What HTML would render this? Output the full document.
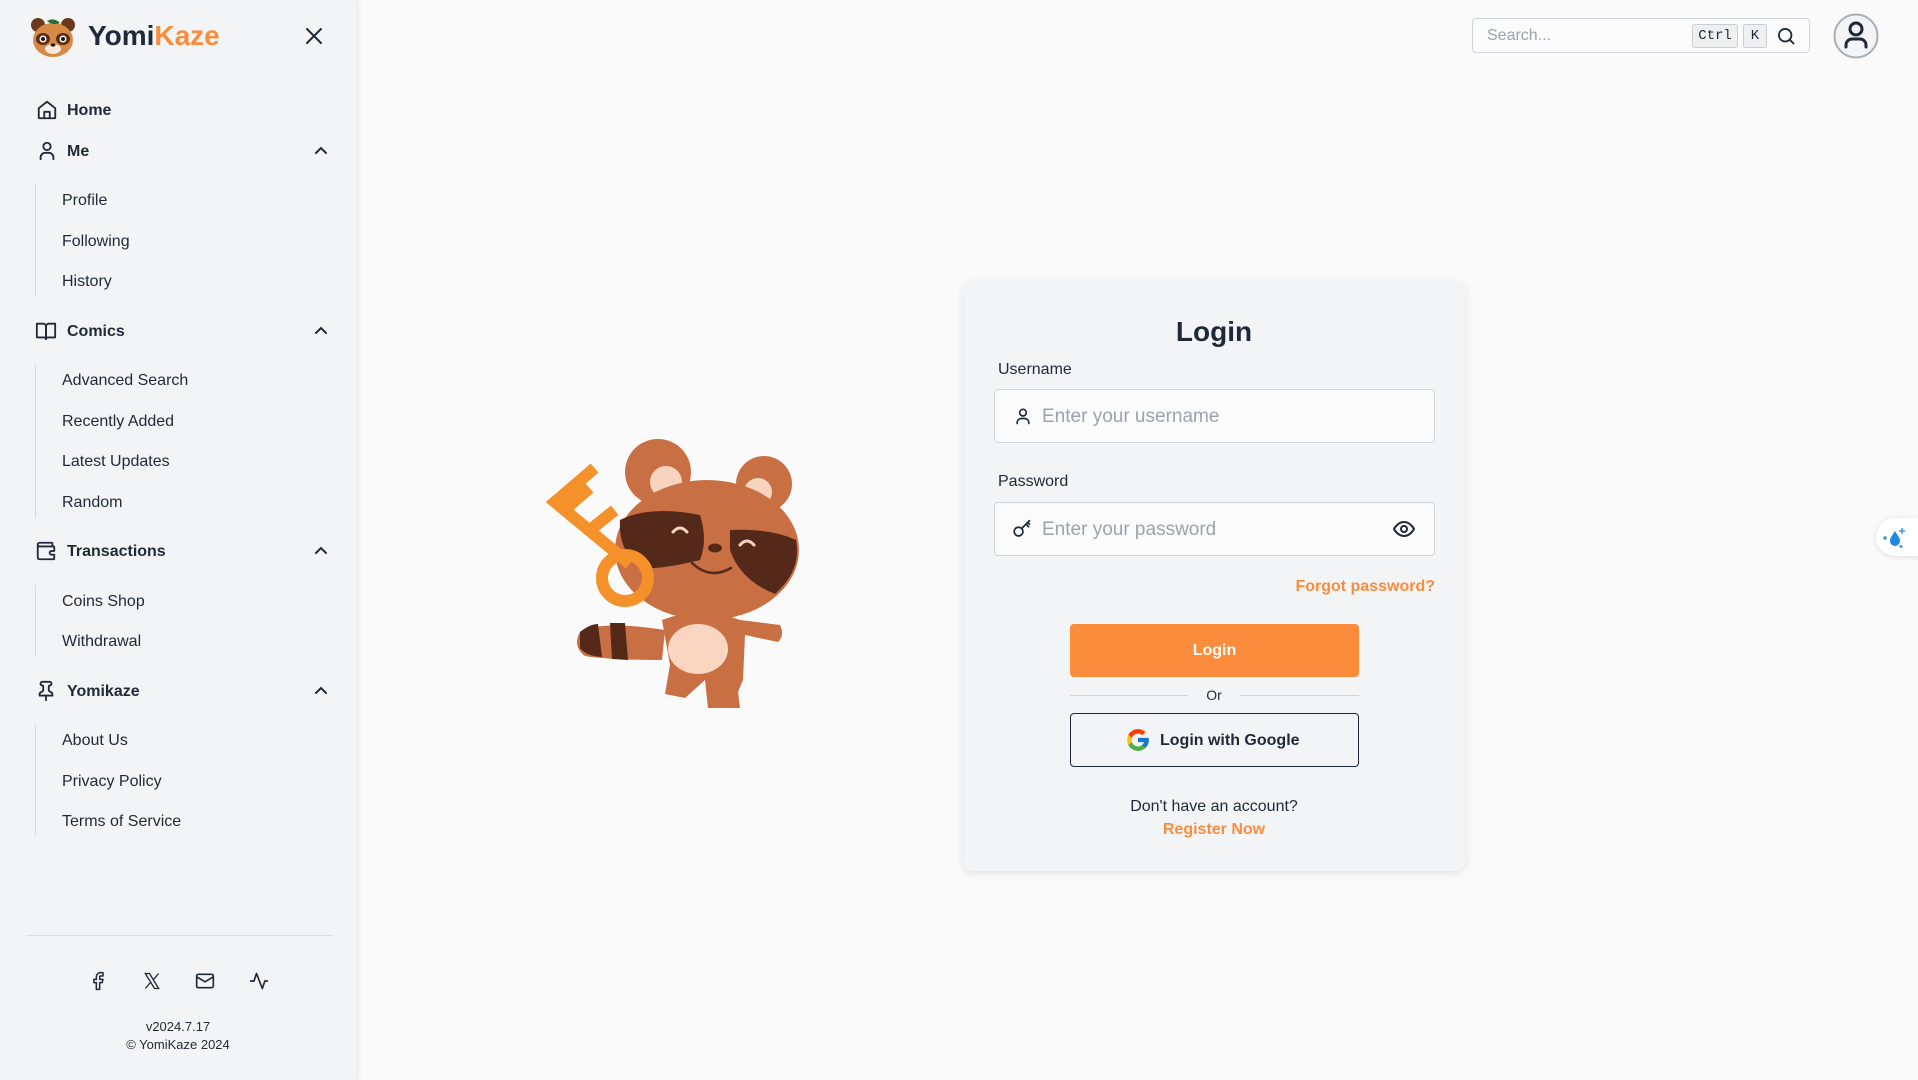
<!DOCTYPE html>
<html><head><meta charset="utf-8">
<style>
*{box-sizing:border-box;margin:0;padding:0}
body{width:1918px;height:1080px;background:#fafafa;font-family:"Liberation Sans",sans-serif;color:#1f2937;position:relative;overflow:hidden}
.sb{position:absolute;left:0;top:0;width:356px;height:1080px;background:#f3f4f6;box-shadow:2px 0 6px rgba(0,0,0,.08)}
.a{position:absolute;white-space:nowrap}
.h{font-weight:bold;font-size:16px;color:#1f2937}
.s{font-size:16px;color:#1f2937}
.ic{position:absolute}
.vl{position:absolute;left:35px;width:1px;background:#d8dadf}
.chev{position:absolute;left:313px}
.card{position:absolute;left:963px;top:281px;width:502px;height:590px;background:#f3f4f6;border-radius:10px;box-shadow:0 2px 8px rgba(0,0,0,.1)}
.inp{position:absolute;left:31px;width:441px;height:54px;border:1px solid #d1d5db;border-radius:4px;background:#fbfbfb}
.ph{position:absolute;left:47px;top:16px;font-size:19px;color:#9ca3af}
</style></head><body>
<div class="sb">
<svg class="ic" style="left:29px;top:15px" width="48" height="44" viewBox="0 0 48 44">
<circle cx="9" cy="10" r="7" fill="#6b3a1e"/><circle cx="39" cy="10" r="7" fill="#6b3a1e"/>
<ellipse cx="24" cy="25" rx="20" ry="17" fill="#d68a45"/>
<ellipse cx="14" cy="24" rx="7" ry="6" fill="#5a2d17"/><ellipse cx="34" cy="24" rx="7" ry="6" fill="#5a2d17"/>
<circle cx="14" cy="24" r="3.5" fill="#fff"/><circle cx="34" cy="24" r="3.5" fill="#fff"/>
<circle cx="14" cy="24" r="2" fill="#2a1408"/><circle cx="34" cy="24" r="2" fill="#2a1408"/>
<ellipse cx="24" cy="34" rx="8" ry="5" fill="#f6e8dc"/><ellipse cx="24" cy="30" rx="2.5" ry="1.6" fill="#2a1408"/>
<path d="M18 6 Q25 2 31 8 Q24 11 18 6Z" fill="#2f6b3a"/>
</svg>
<div class="a" style="left:88px;top:20px;font-size:28px;font-weight:bold;color:#1f2937">Yomi<span style="color:#f98d3d">Kaze</span></div>
<svg class="ic" style="left:304px;top:26px" width="20" height="20" viewBox="0 0 20 20"><path d="M3 3L17 17M17 3L3 17" stroke="#1f2937" stroke-width="2" stroke-linecap="round"/></svg>

<svg class="ic" style="left:36px;top:99px" width="22" height="22" viewBox="0 0 24 24" fill="none" stroke="#1f2937" stroke-width="2" stroke-linejoin="round"><path d="M3 10L12 3L21 10V20a1 1 0 0 1-1 1H4a1 1 0 0 1-1-1Z"/><path d="M9 21v-7h6v7"/></svg>
<div class="a h" style="left:67px;top:102px">Home</div>

<svg class="ic" style="left:36px;top:140px" width="22" height="22" viewBox="0 0 24 24" fill="none" stroke="#1f2937" stroke-width="2" stroke-linecap="round"><circle cx="12" cy="7" r="4"/><path d="M5 21v-2a5 5 0 0 1 5-5h4a5 5 0 0 1 5 5v2"/></svg>
<div class="a h" style="left:67px;top:143px">Me</div>
<svg class="chev" style="top:143px" width="16" height="16" viewBox="0 0 16 16"><path d="M3 10L8 5L13 10" stroke="#1f2937" stroke-width="2" fill="none" stroke-linecap="round"/></svg>
<div class="vl" style="top:184px;height:112px"></div>
<div class="a s" style="left:62px;top:192px">Profile</div>
<div class="a s" style="left:62px;top:233px">Following</div>
<div class="a s" style="left:62px;top:273px">History</div>

<svg class="ic" style="left:35px;top:320px" width="22" height="22" viewBox="0 0 24 24" fill="none" stroke="#1f2937" stroke-width="2" stroke-linejoin="round"><path d="M2 4h7a3 3 0 0 1 3 3v14a2 2 0 0 0-2-2H2Z"/><path d="M22 4h-7a3 3 0 0 0-3 3v14a2 2 0 0 1 2-2h8Z"/></svg>
<div class="a h" style="left:67px;top:323px">Comics</div>
<svg class="chev" style="top:323px" width="16" height="16" viewBox="0 0 16 16"><path d="M3 10L8 5L13 10" stroke="#1f2937" stroke-width="2" fill="none" stroke-linecap="round"/></svg>
<div class="vl" style="top:364px;height:154px"></div>
<div class="a s" style="left:62px;top:372px">Advanced Search</div>
<div class="a s" style="left:62px;top:413px">Recently Added</div>
<div class="a s" style="left:62px;top:453px">Latest Updates</div>
<div class="a s" style="left:62px;top:494px">Random</div>

<svg class="ic" style="left:35px;top:540px" width="22" height="22" viewBox="0 0 24 24" fill="none" stroke="#1f2937" stroke-width="2" stroke-linejoin="round"><path d="M19 7V4a1 1 0 0 0-1-1H5a2 2 0 0 0 0 4h15a1 1 0 0 1 1 1v4h-3a2 2 0 0 0 0 4h3v4a1 1 0 0 1-1 1H5a2 2 0 0 1-2-2V5"/></svg>
<div class="a h" style="left:67px;top:543px">Transactions</div>
<svg class="chev" style="top:543px" width="16" height="16" viewBox="0 0 16 16"><path d="M3 10L8 5L13 10" stroke="#1f2937" stroke-width="2" fill="none" stroke-linecap="round"/></svg>
<div class="vl" style="top:585px;height:72px"></div>
<div class="a s" style="left:62px;top:593px">Coins Shop</div>
<div class="a s" style="left:62px;top:633px">Withdrawal</div>

<svg class="ic" style="left:35px;top:680px" width="22" height="22" viewBox="0 0 24 24" fill="none" stroke="#1f2937" stroke-width="2" stroke-linecap="round" stroke-linejoin="round"><path d="M12 17v5"/><path d="M9 10.8a2 2 0 0 1-1.1 1.8l-1.8.9A2 2 0 0 0 5 15.2V17h14v-1.8a2 2 0 0 0-1.1-1.7l-1.8-.9A2 2 0 0 1 15 10.8V7a1 1 0 0 1 1-1 2 2 0 0 0 0-4H8a2 2 0 0 0 0 4 1 1 0 0 1 1 1z"/></svg>
<div class="a h" style="left:67px;top:683px">Yomikaze</div>
<svg class="chev" style="top:683px" width="16" height="16" viewBox="0 0 16 16"><path d="M3 10L8 5L13 10" stroke="#1f2937" stroke-width="2" fill="none" stroke-linecap="round"/></svg>
<div class="vl" style="top:724px;height:112px"></div>
<div class="a s" style="left:62px;top:732px">About Us</div>
<div class="a s" style="left:62px;top:773px">Privacy Policy</div>
<div class="a s" style="left:62px;top:813px">Terms of Service</div>

<div class="a" style="left:26px;top:935px;width:307px;height:1px;background:#dcdee2"></div>
<svg class="ic" style="left:88px;top:971px" width="20" height="20" viewBox="0 0 24 24" fill="none" stroke="#1f2937" stroke-width="1.8" stroke-linejoin="round"><path d="M18 2h-3a5 5 0 0 0-5 5v3H7v4h3v8h4v-8h3l1-4h-4V7a1 1 0 0 1 1-1h3z"/></svg>
<svg class="ic" style="left:142px;top:971px" width="20" height="20" viewBox="0 0 24 24" fill="none" stroke="#1f2937" stroke-width="1.6"><path d="M4 3h5l11 18h-5z"/><path d="M20 3L13.5 10.5M4 21l6.5-7.5"/></svg>
<svg class="ic" style="left:195px;top:971px" width="20" height="20" viewBox="0 0 24 24" fill="none" stroke="#1f2937" stroke-width="2" stroke-linejoin="round"><rect x="2" y="4" width="20" height="16" rx="2"/><path d="M2 7l10 6 10-6"/></svg>
<svg class="ic" style="left:249px;top:971px" width="20" height="20" viewBox="0 0 24 24" fill="none" stroke="#1f2937" stroke-width="2" stroke-linecap="round" stroke-linejoin="round"><path d="M22 12h-3l-3 9L9 3l-3 9H2"/></svg>
<div class="a" style="left:0;width:356px;text-align:center;top:1019px;font-size:13px;color:#1f2937">v2024.7.17</div>
<div class="a" style="left:0;width:356px;text-align:center;top:1037px;font-size:13px;color:#1f2937">© YomiKaze 2024</div>
</div>

<div class="a" style="left:1472px;top:18px;width:338px;height:35px;border:1px solid #d1d5db;border-radius:4px;background:#fbfbfb"></div>
<div class="a" style="left:1487px;top:27px;font-size:16px;color:#9ca3af">Search...</div>
<div class="a" style="left:1692px;top:24px;width:46px;height:24px;border:1px solid #c9ccd1;border-radius:3px;background:#eef0f2;font-family:'Liberation Mono',monospace;font-size:14px;text-align:center;line-height:22px">Ctrl</div>
<div class="a" style="left:1743px;top:24px;width:24px;height:24px;border:1px solid #c9ccd1;border-radius:3px;background:#eef0f2;font-family:'Liberation Mono',monospace;font-size:14px;text-align:center;line-height:22px">K</div>
<svg class="ic" style="left:1776px;top:26px" width="20" height="20" viewBox="0 0 24 24" fill="none" stroke="#1f2937" stroke-width="2.2" stroke-linecap="round"><circle cx="11" cy="11" r="7.5"/><path d="M17 17l4 4"/></svg>
<svg class="ic" style="left:1833px;top:13px" width="46" height="46" viewBox="0 0 46 46"><circle cx="23" cy="23" r="21.5" fill="#f3f4f6" stroke="#a8b0b8" stroke-width="2"/><circle cx="23" cy="16" r="6" fill="none" stroke="#1f2937" stroke-width="3"/><path d="M13 34v-2a6 6 0 0 1 6-6h8a6 6 0 0 1 6 6v2" fill="none" stroke="#1f2937" stroke-width="3" stroke-linecap="round"/></svg>

<div class="a" style="left:1876px;top:518px;width:60px;height:38px;border-radius:19px;background:#fff;box-shadow:0 1px 6px rgba(0,0,0,.12)"></div>
<svg class="ic" style="left:1880px;top:525px" width="30" height="26" viewBox="0 0 30 26"><path d="M15 6 C12 11 10 13 10 16 a5 5 0 0 0 10 0 C20 13 18 11 15 6Z" fill="#1e88e5"/><path d="M22 3v6M19 6h6M5 11v4M3 13h4M21 20v3M19.5 21.5h3" stroke="#1e88e5" stroke-width="1.3"/></svg>

<svg class="ic" style="left:540px;top:420px" width="280" height="300" viewBox="0 0 280 300">
<circle cx="118" cy="52" r="33" fill="#c87043"/><circle cx="126" cy="62" r="16" fill="#f8d4be"/>
<circle cx="224" cy="64" r="28" fill="#c87043"/><circle cx="218" cy="72" r="14" fill="#f8d4be"/>
<path d="M40 212 Q60 200 125 210 L122 240 Q70 240 45 236 Q32 226 40 212Z" fill="#c87043"/>
<path d="M40 212 Q50 204 58 204 L62 237 Q46 236 40 228Z" fill="#55291a"/>
<path d="M70 203 L85 203 L88 240 L72 239Z" fill="#55291a"/>
<path d="M122 200 Q160 185 200 200 L240 205 Q245 215 238 222 L205 215 L203 260 L198 272 L200 288 L168 288 L165 260 L145 278 L125 274 L130 245 Z" fill="#c87043"/>
<ellipse cx="158" cy="229" rx="30" ry="25" fill="#fad5c0"/>
<ellipse cx="167" cy="130" rx="92" ry="70" fill="#c87043"/>
<path d="M80 100 Q110 85 160 95 Q168 120 160 140 Q120 150 100 148 Q78 130 80 100Z" fill="#55291a"/>
<path d="M190 110 Q230 108 256 120 Q262 150 235 174 Q200 160 190 130Z" fill="#55291a"/>
<path d="M133 112 Q140 104 147 112" stroke="#fad5c0" stroke-width="3" fill="none" stroke-linecap="round"/>
<path d="M200 125 Q207 117 214 125" stroke="#fad5c0" stroke-width="3" fill="none" stroke-linecap="round"/>
<ellipse cx="175" cy="128" rx="7" ry="4.5" fill="#55291a"/>
<path d="M152 143 Q170 160 191 148" stroke="#55291a" stroke-width="2.5" fill="none" stroke-linecap="round"/>
<path d="M30 85 L45 72 M85 140 L15 82 L50 52 M50 110 L70 94" stroke="#f5912a" stroke-width="12" fill="none" stroke-linecap="square"/>
<circle cx="85" cy="158" r="23" fill="none" stroke="#f5912a" stroke-width="12"/>
</svg>

<div class="card">
<div class="a" style="left:0;width:502px;text-align:center;top:35px;font-size:28px;font-weight:bold;color:#1f2937">Login</div>
<div class="a" style="left:35px;top:80px;font-size:16px;color:#1f2937">Username</div>
<div class="inp" style="top:108px">
<svg class="ic" style="left:18px;top:16px" width="20" height="20" viewBox="0 0 24 24" fill="none" stroke="#1f2937" stroke-width="2" stroke-linecap="round"><circle cx="12" cy="8" r="4"/><path d="M5 21v-1a5 5 0 0 1 5-5h4a5 5 0 0 1 5 5v1"/></svg>
<div class="ph">Enter your username</div></div>
<div class="a" style="left:35px;top:192px;font-size:16px;color:#1f2937">Password</div>
<div class="inp" style="top:221px">
<svg class="ic" style="left:17px;top:15px" width="21" height="21" viewBox="0 0 24 24" fill="none" stroke="#1f2937" stroke-width="2" stroke-linecap="round"><circle cx="7.5" cy="15.5" r="5"/><path d="M11 12l9-9M16 7l3 3M18 5l2 2"/></svg>
<div class="ph">Enter your password</div>
<svg class="ic" style="left:397px;top:14px" width="24" height="24" viewBox="0 0 24 24" fill="none" stroke="#1f2937" stroke-width="2"><path d="M2 12s3.5-7 10-7 10 7 10 7-3.5 7-10 7S2 12 2 12z"/><circle cx="12" cy="12" r="3"/></svg>
</div>
<div class="a" style="right:30px;top:297px;font-size:16px;font-weight:bold;color:#f98d3d">Forgot password?</div>
<div class="a" style="left:107px;top:343px;width:289px;height:53px;background:#fb8c3c;border-radius:4px;color:#fff;font-weight:bold;font-size:16px;text-align:center;line-height:53px">Login</div>
<div class="a" style="left:107px;top:414px;width:118px;height:1px;background:#d1d5db"></div>
<div class="a" style="left:277px;top:414px;width:119px;height:1px;background:#d1d5db"></div>
<div class="a" style="left:0;width:502px;text-align:center;top:406px;font-size:14px;color:#1f2937">Or</div>
<div class="a" style="left:107px;top:432px;width:289px;height:54px;border:1.5px solid #1f2937;border-radius:4px"></div>
<svg class="ic" style="left:162px;top:446px" width="26" height="26" viewBox="0 0 48 48"><path fill="#FFC107" d="M43.6 20H24v8h11.3C33.7 32.7 29.2 36 24 36c-6.6 0-12-5.4-12-12s5.4-12 12-12c3.1 0 5.8 1.2 7.9 3.1l5.7-5.7C34 6.1 29.3 4 24 4 12.9 4 4 12.9 4 24s8.9 20 20 20 20-8.9 20-20c0-1.3-.1-2.7-.4-4z"/><path fill="#FF3D00" d="M6.3 14.7l6.6 4.8C14.7 15.1 19 12 24 12c3.1 0 5.8 1.2 7.9 3.1l5.7-5.7C34 6.1 29.3 4 24 4 16.3 4 9.7 8.3 6.3 14.7z"/><path fill="#4CAF50" d="M24 44c5.2 0 9.9-2 13.4-5.2l-6.2-5.2C29.2 35.1 26.7 36 24 36c-5.2 0-9.6-3.3-11.3-8l-6.5 5C9.5 39.6 16.2 44 24 44z"/><path fill="#1976D2" d="M43.6 20H24v8h11.3c-.8 2.2-2.2 4.2-4.1 5.6l6.2 5.2C37 39.2 44 34 44 24c0-1.3-.1-2.7-.4-4z"/></svg>
<div class="a" style="left:197px;top:451px;font-size:16px;font-weight:bold;color:#1f2937">Login with Google</div>
<div class="a" style="left:0;width:502px;text-align:center;top:517px;font-size:16px;color:#1f2937">Don't have an account?</div>
<div class="a" style="left:0;width:502px;text-align:center;top:540px;font-size:16px;font-weight:bold;color:#f98d3d">Register Now</div>
</div>
</body></html>
